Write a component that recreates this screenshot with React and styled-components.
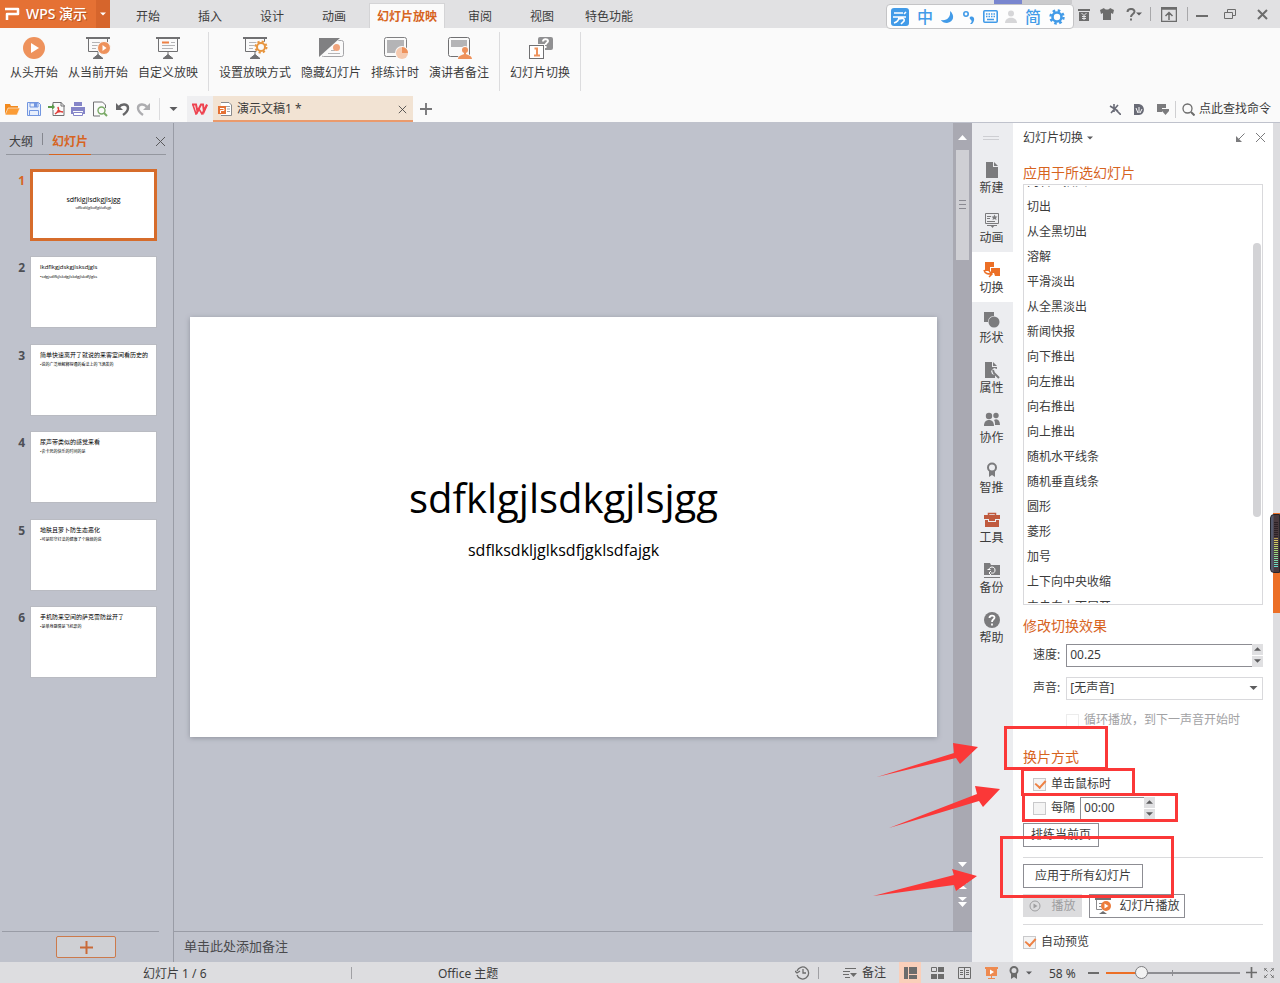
import React, { useState } from 'react';
import styled, { createGlobalStyle, css } from 'styled-components';

const GlobalStyle = createGlobalStyle`
  * { box-sizing: border-box; }
  body {
    margin: 0;
    overflow: hidden;
    font: 12px/16px "Noto Sans", "Noto Sans CJK SC", sans-serif;
    color: #3c3c3c;
  }
  button, input, select { font: inherit; color: inherit; }
  button { border: 0; padding: 0; background: none; cursor: pointer; }
  svg { display: block; flex: none; }
  h2, p, ul, ol { margin: 0; padding: 0; }
  li { list-style: none; }
`;

const Window = styled.div`
  position: relative;
  display: flex;
  flex-direction: column;
  height: 100vh;
  background: #fafafa;
`;

/* ---------- title bar ---------- */

const TitleBar = styled.header`
  display: flex;
  align-items: stretch;
  height: 28px;
  background: #e1e1e3;
`;

const Brand = styled.button`
  display: flex;
  align-items: center;
  gap: 5px;
  width: 96px;
  padding-left: 5px;
  background: #e57134;
  color: #fff;
  font-size: 14px;
  font-weight: 500;
  white-space: nowrap;
  text-shadow: 1px 1px 0 #b9531f;
`;

const BrandMore = styled.button`
  display: flex;
  align-items: center;
  justify-content: center;
  width: 14px;
  margin-right: 7px;
  background: #d6652c;
`;

const Tabs = styled.nav`
  display: flex;
  align-items: flex-end;
`;

const Tab = styled.button`
  min-width: 62px;
  height: 25px;
  padding: 2px 12px 0;
  white-space: nowrap;
  ${p => p.$active && css`
    margin: 0 4px;
    padding: 2px 7px 0;
    border: 1px solid #d4d4d6;
    border-bottom: 0;
    background: #fafafa;
    color: #d7641f;
    font-weight: 700;
  `}
`;

const WindowTools = styled.div`
  display: flex;
  align-items: center;
  margin-left: auto;
`;

const ToolButton = styled.button`
  display: flex;
  align-items: center;
  justify-content: center;
  width: ${p => p.$w || 24}px;
  height: 22px;
  color: #6c6c6c;
`;

const Divider = styled.span`
  flex: none;
  width: 1px;
  height: ${p => p.$h || 14}px;
  margin: 0 ${p => p.$mr || 0}px 0 ${p => p.$ml || 0}px;
  background: ${p => p.$color || '#b4b4b8'};
`;

/* floating input-method bar */
const ImeBar = styled.div`
  position: absolute;
  top: 4px;
  right: 206px;
  display: flex;
  align-items: center;
  justify-content: space-between;
  width: 188px;
  height: 25px;
  padding: 0 8px 0 4px;
  border: 1px solid #c4c4c6;
  border-radius: 4px;
  background: #fdfdfd;
  color: #429be8;
`;

const ImeText = styled.button`
  width: 18px;
  color: #429be8;
  font-size: 16px;
  line-height: 20px;
  font-weight: 500;
`;

const ImeEdge = styled.div`
  position: absolute;
  top: 0;
  right: 208px;
  width: 78px;
  height: 4px;
  background: linear-gradient(90deg, #7986cf 28px, #cbcbcd 28px);
`;

/* ---------- ribbon ---------- */

const Ribbon = styled.div`
  display: flex;
  align-items: flex-start;
  gap: 10px;
  height: 68px;
  padding: 4px 10px 0;
`;

const RibbonButton = styled.button`
  display: flex;
  flex-direction: column;
  align-items: center;
  gap: 5px;
  padding-top: 4px;
  white-space: nowrap;
`;

const QuickBar = styled.div`
  display: flex;
  align-items: center;
  height: 27px;
  padding: 0 9px 0 1px;
  border-bottom: 1px solid #bfc2cc;
`;

const HomeTab = styled.button`
  display: flex;
  align-items: center;
  justify-content: center;
  width: 26px;
  height: 26px;
  background: #efeff1;
`;

const DocTab = styled.div`
  display: flex;
  align-items: center;
  gap: 4px;
  width: 200px;
  height: 26px;
  padding: 2px 5px 0 4px;
  border-bottom: 2px solid #ea9a6c;
  background: #f2e3d3;
  span { flex: 1; }
`;

const SearchButton = styled.button`
  display: flex;
  align-items: center;
  gap: 4px;
  margin-left: 6px;
  white-space: nowrap;
`;

/* ---------- workspace ---------- */

const Workspace = styled.main`
  flex: 1;
  display: flex;
  min-height: 0;
  background: #bfc2cc;
`;

const SlidesPane = styled.aside`
  display: flex;
  flex-direction: column;
  flex: none;
  width: 174px;
  border-right: 1px solid #999ca6;
`;

const PaneHead = styled.div`
  display: flex;
  align-items: center;
  height: 32px;
  margin: 0 7px 14px 6px;
  border-bottom: 1px solid #94979f;
`;

const PaneTab = styled.button`
  align-self: flex-end;
  height: 32px;
  margin-bottom: -1px;
  padding: 6px 3px 0;
  border-bottom: 1px solid ${p => (p.$active ? '#d7641f' : 'transparent')};
  color: ${p => (p.$active ? '#d7641f' : 'inherit')};
  font-weight: ${p => (p.$active ? 700 : 400)};
`;

const PaneClose = styled.button`
  margin: 6px 0 0 auto;
`;

const ThumbList = styled.ol`
  display: flex;
  flex-direction: column;
  justify-content: space-between;
  height: 509px;
`;

const ThumbItem = styled.li`
  display: flex;
  gap: 5px;
  padding-left: 16px;
  font-weight: 700;
  color: ${p => (p.$active ? '#d7641f' : '#4d4f55')};
  > span { width: 9px; padding-top: 4px; text-align: right; }
`;

const Thumb = styled.button`
  display: flex;
  flex-direction: column;
  align-items: flex-start;
  width: 127px;
  height: 72px;
  padding: 6px 9px;
  overflow: hidden;
  border: 1px solid #b9bbc2;
  background: #fff;
  color: #000;
  font-family: "Open Sans", "Noto Sans CJK SC", sans-serif;
  font-size: 6px;
  line-height: 8px;
  font-weight: 400;
  text-align: left;
  white-space: nowrap;
  small { font-size: 4px; line-height: 12px; }
  ${p => p.$active && css`
    align-items: center;
    justify-content: center;
    padding-bottom: 8px;
    border: 3px solid #d66c2b;
    font-size: 7px;
    small { font-size: 3px; line-height: 8px; }
  `}
`;

const PaneFoot = styled.div`
  display: flex;
  justify-content: center;
  height: 31px;
  margin: auto 14px 0 2px;
  padding: 4px 0 4px 11px;
  border-top: 1px solid #999ca6;
`;

const AddSlide = styled.button`
  display: flex;
  align-items: center;
  justify-content: center;
  width: 60px;
  height: 22px;
  border: 1px solid #cc7a4b;
  border-radius: 2px;
  background: #cfd0d4;
`;

const Editor = styled.section`
  flex: 1;
  display: flex;
  flex-direction: column;
  min-width: 0;
`;

const Stage = styled.div`
  flex: 1;
  display: flex;
  min-height: 0;
`;

const Canvas = styled.div`
  flex: 1;
  display: flex;
  align-items: center;
  padding: 0 16px;
`;

const Slide = styled.div`
  display: flex;
  flex-direction: column;
  align-items: center;
  justify-content: center;
  gap: 14px;
  width: 100%;
  aspect-ratio: 16 / 9;
  padding-bottom: 22px;
  background: #fff;
  box-shadow: 0 1px 5px #8f929c;
  color: #000;
  font-family: "Open Sans", sans-serif;
`;

const SlideTitle = styled.p`
  font-size: 40px;
  line-height: 54px;
`;

const SlideSub = styled.p`
  font-size: 16px;
  line-height: 22px;
`;

const ScrollBar = styled.div`
  display: flex;
  flex-direction: column;
  align-items: center;
  width: 19px;
  padding: 11px 0 24px;
  background: #a9a9b2;
`;

const ScrollThumb = styled.div`
  display: flex;
  align-items: center;
  justify-content: center;
  width: 13px;
  height: 110px;
  margin: 8px 0 auto;
  background: #cfcfd4;
`;

const Notes = styled.div`
  height: 31px;
  padding: 6px 10px;
  border-top: 1px solid #999ca6;
  font-size: 13px;
  color: #4a4a4d;
`;

const SideTabs = styled.nav`
  flex: none;
  width: 41px;
  background: #ecedf0;
`;

const Grip = styled.div`
  width: 16px;
  height: 4px;
  margin: 13px 0 12px 11px;
  border: 1px solid #cdced2;
  border-width: 1px 0;
`;

const SideTab = styled.button`
  display: flex;
  flex-direction: column;
  align-items: center;
  gap: 1px;
  width: 100%;
  height: 50px;
  padding: 9px 2px 0 0;
  background: ${p => (p.$active ? '#fff' : 'transparent')};
`;

const Panel = styled.aside`
  display: flex;
  flex-direction: column;
  flex: none;
  width: 267px;
  padding: 0 10px 8px;
  border-right: 7px solid #dddde0;
  background: #fff;
`;

const PanelHead = styled.div`
  display: flex;
  align-items: center;
  height: 29px;
  margin: 0 -3px 10px 0;
  button { display: flex; align-items: center; gap: 4px; }
  button + button { margin-left: auto; }
  button + button + button { margin-left: 10px; }
`;

const Heading = styled.h2`
  margin-top: ${p => p.$mt || 0}px;
  color: #d7641f;
  font-size: 14px;
  line-height: 22px;
  font-weight: 400;
`;

const ListFrame = styled.div`
  flex: 1;
  display: flex;
  min-height: 0;
  margin-bottom: 10px;
  padding: 1px;
  border: 1px solid #d9d9dc;
`;

const List = styled.ul`
  flex: 1;
  display: flex;
  flex-direction: column;
  justify-content: center;
  padding-bottom: 2px;
  overflow: hidden;
  li {
    flex: none;
    height: 25px;
    padding-left: 2px;
    line-height: 25px;
  }
`;

const ListThumb = styled.div`
  width: 8px;
  height: 274px;
  margin-top: 57px;
  border-radius: 4px;
  background: #d3d3d6;
`;

const Field = styled.div`
  display: flex;
  align-items: center;
  gap: ${p => p.$gap || 6}px;
  height: 24px;
  margin-top: ${p => p.$mt || 0}px;
  padding-left: ${p => p.$indent || 0}px;
`;

const SpinBox = styled.div`
  display: flex;
  flex: ${p => (p.$w ? 'none' : 1)};
  width: ${p => (p.$w ? p.$w + 'px' : 'auto')};
  height: 23px;
  input {
    flex: 1;
    min-width: 0;
    padding: 0 3px;
    border: 1px solid #8d8d93;
    border-right: 0;
    background: #fff;
    outline: 0;
  }
`;

const Spinners = styled.div`
  display: flex;
  flex-direction: column;
  gap: 1px;
  width: 11px;
  button {
    flex: 1;
    display: flex;
    align-items: center;
    justify-content: center;
    background: #e0e0e2;
  }
`;

const SelectBox = styled.div`
  flex: 1;
  position: relative;
  select {
    width: 100%;
    height: 23px;
    padding: 0 3px;
    border: 1px solid #d9d9dc;
    background: #fff;
    appearance: none;
  }
  svg { position: absolute; right: 5px; top: 9px; pointer-events: none; }
`;

const Check = styled.label`
  display: flex;
  align-items: center;
  gap: 5px;
  height: ${p => p.$h || 24}px;
  margin-top: ${p => p.$mt || 0}px;
  padding-left: ${p => p.$indent || 0}px;
  color: ${p => (p.$off ? '#a2a2a4' : 'inherit')};
  white-space: nowrap;
  input {
    flex: none;
    display: flex;
    align-items: center;
    justify-content: center;
    width: 13px;
    height: 13px;
    margin: 0;
    border: 1px solid ${p => (p.$off ? '#ececec' : '#c9c9cb')};
    background: ${p => (p.$off ? '#fff' : '#f4f4f4')};
    appearance: none;
  }
  input:checked::after {
    content: '';
    width: 5px;
    height: 8px;
    margin: 0 0 3px 1px;
    border: solid #ee8144;
    border-width: 0 2px 2px 0;
    transform: rotate(42deg);
  }
`;

const Button = styled.button`
  display: flex;
  align-items: center;
  justify-content: center;
  gap: 7px;
  width: ${p => p.$w}px;
  height: 24px;
  margin-top: ${p => p.$mt || 0}px;
  border: 1px solid #8d8d93;
  background: #fff;
  white-space: nowrap;
  &:disabled {
    height: 23px;
    gap: 10px;
    border-color: #dcdcde;
    background: #dcdcde;
    color: #9e9ea0;
  }
`;

const ButtonRow = styled.div`
  display: flex;
  gap: 7px;
  margin: 6px 0;
`;

const Rule = styled.hr`
  width: 100%;
  height: 1px;
  margin: ${p => p.$mt || 0}px 0 0;
  border: 0;
  background: #dadadc;
`;

/* ---------- status bar ---------- */

const StatusBar = styled.footer`
  display: flex;
  align-items: center;
  height: 21px;
  background: #dddde0;
`;

const StatusText = styled.span`
  width: ${p => p.$w}px;
  padding: 2px 0 0 ${p => p.$pl}px;
  white-space: nowrap;
`;

const StatusRight = styled.div`
  display: flex;
  align-items: center;
  margin-left: auto;
`;

const ViewButton = styled.button`
  display: flex;
  align-items: center;
  justify-content: center;
  gap: 5px;
  width: ${p => p.$w || 27}px;
  height: 21px;
  white-space: nowrap;
  svg + svg { margin-left: 2px; }
`;

const ActiveView = styled(ViewButton)`
  width: 22px;
  margin: 0 3px 0 10px;
  background: #facfba;
`;

const Zoom = styled.input`
  width: 134px;
  height: 15px;
  margin: 0 5px 0 7px;
  appearance: none;
  background:
    linear-gradient(#8e8e92, #8e8e92) 66px 5px / 1px 6px no-repeat,
    linear-gradient(90deg, #ec6f26 30px, #8e8e92 30px) 0 7px / 100% 2px no-repeat;
  &::-webkit-slider-thumb {
    appearance: none;
    width: 13px;
    height: 13px;
    border: 1px solid #7d7d80;
    border-radius: 50%;
    background: #f2f2f2;
  }
`;

/* ---------- overlays ---------- */

const Marks = styled.svg`
  position: absolute;
  right: 100px;
  bottom: 81px;
  pointer-events: none;
`;

const EdgeWidget = styled.div`
  position: absolute;
  right: 0;
  bottom: 370px;
  width: 7px;
  height: 100px;
  background: #ec6f26;
`;

const Meter = styled.div`
  position: absolute;
  right: 0;
  top: 1px;
  width: 10px;
  height: 59px;
  padding: 6px 1px 6px 3px;
  border: 1px solid #26262c;
  border-radius: 4px 0 0 4px;
  background: linear-gradient(90deg, #565b6e 2px, #493a3e 3px);
  &::before {
    content: '';
    display: block;
    height: 46px;
    background: repeating-linear-gradient(#493a3e 0 1px, transparent 1px 2px),
      linear-gradient(#2c2226 16px, #e2c65c 18px, #9fd873 30px, #62dcd0);
  }
`;

/* ---------- icons ---------- */

const Icon = ({ w = 16, h = w, box, children, ...rest }) => (
  <svg width={w} height={h} viewBox={box || `0 0 ${w} ${h}`} fill="none" aria-hidden="true" {...rest}>
    {children}
  </svg>
);

const Caret = ({ up, color = '#5c5c5e', w = 7 }) => (
  <Icon w={w} h={4} box="0 0 8 4"><path d={up ? 'M0 4h8L4 0z' : 'M0 0h8L4 4z'} fill={color} /></Icon>
);

const Cross = ({ s = 11, color = '#5a5a5c', sw = 1 }) => (
  <Icon w={s} box="0 0 11 11"><path d="M1 1l9 9M10 1l-9 9" stroke={color} strokeWidth={sw} /></Icon>
);

const Plus = ({ s = 13, color = '#767678', sw = 2 }) => (
  <Icon w={s} box="0 0 13 13"><path d="M6.500 0v13M0 6.500h13" stroke={color} strokeWidth={sw} /></Icon>
);

const Board = ({ children }) => (
  <Icon w={26} h={24}>
    <path d="M1 2h24" stroke="#707072" strokeWidth="2" />
    <path d="M3.500 3v12.500h19V3" stroke="#707072" />
    <path d="M13 16v4M8 22.500l5-4 5 4z" fill="#707072" stroke="#707072" />
    {children}
  </Icon>
);

const boardLines = <path d="M7 6.500h9M7 9.500h6M7 12.500h4" stroke="#b4b4b6" />;

const ribbonGroups = [
  [
    ['从头开始', (
      <Icon w={24}><circle cx="12" cy="12" r="11" fill="#ee925c" /><path d="M9 7l8 5-8 5z" fill="#fff" /></Icon>
    )],
    ['从当前开始', (
      <Board>{boardLines}<circle cx="19" cy="12" r="6.500" fill="#ee925c" stroke="#fafafa" /><path d="M17.500 9v6l4-3z" fill="#fff" /></Board>
    )],
    ['自定义放映', (
      <Board><path d="M7 6.500h7" stroke="#ee8144" strokeWidth="2" /><path d="M16 6.500h4M7 9.500h13M7 12.500h11" stroke="#b4b4b6" /></Board>
    )],
  ],
  [
    ['设置放映方式', (
      <Board>
        {boardLines}
        <circle cx="19" cy="11" r="6.500" fill="#fafafa" />
        <circle cx="19" cy="11" r="5.500" stroke="#e7953f" strokeWidth="2" strokeDasharray="2.200 2.120" />
        <circle cx="19" cy="11" r="4" stroke="#e7953f" strokeWidth="2" />
      </Board>
    )],
    ['隐藏幻灯片', (
      <Icon w={26} h={24}>
        <rect x="3.500" y="4.500" width="22" height="16" rx="2" stroke="#a5a5a8" />
        <path d="M10 17.500h12M13 14.500h4" stroke="#b4b4b6" />
        <circle cx="18.500" cy="11.500" r="3.500" fill="#f0a47c" />
        <path d="M1 2h22L1 23z" fill="#fafafa" /><path d="M1 2h21L1 21z" fill="#808082" />
      </Icon>
    )],
    ['排练计时', (
      <Icon w={26} h={24}>
        <rect x="2.500" y="1.500" width="22" height="19" rx="2" stroke="#808082" />
        <path d="M5 4h17v13H5z" fill="#b4b4b6" />
        <circle cx="20" cy="17" r="7" fill="#fafafa" /><circle cx="20" cy="17" r="6" fill="#f5c9ae" /><path d="M20 11a6 6 0 0 1 6 6h-6z" fill="#ee925c" />
      </Icon>
    )],
    ['演讲者备注', (
      <Icon w={26} h={24}>
        <rect x="2.500" y="1.500" width="21" height="19" rx="2" stroke="#707072" />
        <path d="M5 4h16v7H5z" fill="#b4b4b6" />
        <path d="M11 24c0-4 3-5 5-6-2-3-1-8 3-8s5 5 3 8c2 1 4 2 4 6z" fill="#fafafa" />
        <circle cx="19" cy="14" r="3" fill="#ee925c" /><path d="M12 23c0-3 4-4 6-5v-2h2v2c2 1 6 2 6 5z" fill="#ee925c" />
      </Icon>
    )],
  ],
  [
    ['幻灯片切换', (
      <Icon w={26} h={24}>
        <rect x="11" y="1" width="15" height="13" rx="2" fill="#909092" />
        <path d="M16 5.500c0-3 5-3 5-.5 0 2-2.500 1.500-2.500 4M18.500 10v2" stroke="#fff" strokeWidth="2" />
        <rect x="1" y="8" width="17" height="16" fill="#fafafa" /><rect x="2.500" y="9.500" width="14" height="13" fill="#fff" stroke="#707072" />
        <path d="M7.500 12.500h2.500v7M7 19.500h6" stroke="#ee925c" strokeWidth="2" />
      </Icon>
    )],
  ],
];

const quickIcons = [
  ['打开', <Icon w={16}><path d="M1 13V3h5l1 2h7v2H5l-3 6" fill="#f28a1e" /><path d="M4 7h12l-3 7H1z" fill="#fb9c36" stroke="#fafafa" strokeWidth=".6" /></Icon>],
  ['保存', <Icon w={16}><path d="M1.500 1.500h11l2 2v11h-13z" fill="#e8effc" stroke="#7296e0" /><path d="M4 2h8v4H4zM3.500 9.500h9v5h-9z" stroke="#7296e0" /><path d="M8 2h3v4H8z" fill="#7296e0" /></Icon>],
  ['输出为PDF', <Icon w={17} h={16}><path d="M5 5V1.500h8l3 3v10H5V9" stroke="#707072" /><path d="M13 1v4h4" stroke="#707072" /><path d="M0 5h4V3l3 3-3 3V7H0z" fill="#5a9a4a" /><path d="M7 13c3-2 4-5 3-7 0 4 3 5 5 5-3-1-6 0-8 2z" stroke="#e2403c" strokeWidth="1.400" /></Icon>],
  ['打印', <Icon w={16}><path d="M4 1h8v4H4zM1 6h14v7h-2v-3H3v3H1z" fill="#8585c8" /><path d="M3.500 11.500h9v3h-9z" fill="#fff" stroke="#8585c8" /></Icon>],
  ['打印预览', <Icon w={16}><path d="M13.500 7V4l-3-3H1.500v14H8" stroke="#707072" /><circle cx="9.500" cy="9.500" r="3.500" stroke="#79a966" strokeWidth="1.400" /><path d="M12 12l3 3" stroke="#79a966" strokeWidth="2" /></Icon>],
  ['撤消', <Icon w={16}><path d="M5 6c3-4 9-3 9 1 0 3-2 5-5 7" stroke="#666668" strokeWidth="2.400" /><path d="M2 2v7h7z" fill="#666668" /></Icon>],
  ['恢复', <Icon w={16}><path d="M11 6C8 2 2 3 2 7c0 3 2 5 5 7" stroke="#adadb0" strokeWidth="2.400" /><path d="M14 2v7H7z" fill="#adadb0" /></Icon>],
];

const g = '#7b7b7d';
const sideTabs = [
  ['新建', <path d="M3 1h7v5h5v11H3zM11 1l4 4h-4z" fill={g} />],
  ['动画', <><path d="M2.500 2.500h13v10h-13zM4 14.500h10" stroke={g} /><path d="M4 5.500h4M4 7.500h3M4 10.500h8" stroke={g} /><path d="M11.500 3.500l1 2h2l-1.500 1.500.5 2-2-1-2 1 .5-2L8.500 5.500h2z" fill={g} /><path d="M7 14h5l-2.500 3z" fill={g} /></>],
  ['切换', <><path d="M2 1h9v5H7v4H2zM8 7h9v8h-5l-1-3H8z" fill="#ec6f26" /><path d="M1 9c1 4 4 4 7 4M6 10l3 3-3 3" stroke="#ec6f26" strokeWidth="1.500" /></>],
  ['形状', <><path d="M1 1h10v4c-4 0-6 3-6 6H1z" fill={g} /><circle cx="11" cy="11" r="5.500" fill={g} /></>],
  ['属性', <><path d="M2 1h7v5h5v2l-3-1-3 3 1 3 3 1v3H2zM10 1l4 4h-4z" fill={g} /><path d="M10 9l1 3 5 5" stroke={g} strokeWidth="2" /></>],
  ['协作', <><circle cx="6" cy="5" r="3.200" fill={g} /><circle cx="13" cy="4.500" r="2.700" fill={g} /><path d="M1 15c0-4 2-6 5-6s5 2 5 6zM11 9c3-2 6 0 6 5h-5c0-2 0-4-1-5z" fill={g} /></>],
  ['智推', <><circle cx="9" cy="6.500" r="4" stroke={g} strokeWidth="2" /><path d="M6 10h6v6l-3-2-3 2z" fill={g} /></>],
  ['工具', <><path d="M5.500 4.500V2.500h7v2" stroke="#c05a3e" strokeWidth="1.500" /><path d="M1 4h16v4H1z" fill="#c05a3e" /><path d="M2 9h3v2h8V9h3v7H2zM6 8h6v2H6z" fill="#c05a3e" /></>],
  ['备份', <><path d="M1 2h6l1 2h9v10H1z" fill={g} /><path d="M1 16.500h16" stroke={g} /><path d="M6 9c0-4 6-4 6 0s-3 3-4 3M4.500 8.500h3M8 10l-2 2 2 2" stroke="#fff" /></>],
  ['帮助', <><circle cx="9" cy="9" r="8" fill={g} /><path d="M6.500 7c0-3 5-3 5-.5C11.500 8.500 9 8 9 11M9 12.500v2" stroke="#fff" strokeWidth="1.800" /></>],
];

const tabs = ['开始', '插入', '设计', '动画', '幻灯片放映', '审阅', '视图', '特色功能'];

const effects = [
  '向右上插入', '切出', '从全黑切出', '溶解', '平滑淡出', '从全黑淡出', '新闻快报', '向下推出', '向左推出',
  '向右推出', '向上推出', '随机水平线条', '随机垂直线条', '圆形', '菱形', '加号', '上下向中央收缩', '中央向上下展开',
];

const slides = [
  ['sdfklgjlsdkgjlsjgg', 'sdflksdkljglksdfjgklsdfajgk'],
  ['lkdflkgjdskgjlsksdjgls', '•sdgjsdlfkjlskdgjlskdgjlskdfjlgks'],
  ['简单快速离开了就说的来客室间看历史的', '•说的广泛地解释得通的看法上的飞洒发的'],
  ['尿声带类似的感觉来看', '•会卡死的快乐的时间的是'],
  ['地肤且萝卜防生态恶化', '•可是防守打法的健康了个麻烦的说'],
  ['手机防来空间的萨克雷防丝开了', '•是单身感情是飞机票的'],
];

const SpinArrows = ({ label }) => (
  <Spinners>
    <button aria-label={label + '增加'}><Caret up /></button>
    <button aria-label={label + '减少'}><Caret /></button>
  </Spinners>
);

export default function App() {
  const [click, setClick] = useState(true);
  const [timed, setTimed] = useState(false);
  const [preview, setPreview] = useState(true);
  const [zoom, setZoom] = useState(24);

  return (
    <Window>
      <GlobalStyle />
      <TitleBar>
        <Brand>
          <Icon w={16} h={14}><path d="M0 2h13v5H2v6" stroke="#fff" strokeWidth="2.500" strokeLinejoin="round" /></Icon>
          WPS 演示
        </Brand>
        <BrandMore aria-label="菜单"><Caret color="#fff" w={6} /></BrandMore>
        <Tabs>
          {tabs.map(t => <Tab key={t} $active={t === '幻灯片放映'}>{t}</Tab>)}
        </Tabs>
        <WindowTools>
          <ToolButton aria-label="账户"><Icon w={12} h={13}><path d="M0 1h12v2H0zM1 4h10v9H1z" fill="#6c6c6c" /><path d="M3.500 5L6 7.500 8.500 5M6 7.500V12M4 8.500h4M4 10.500h4" stroke="#e1e1e3" /></Icon></ToolButton>
          <ToolButton $w={22} aria-label="皮肤"><Icon w={14} h={12}><path d="M4 0c1 2 5 2 6 0l4 2-1 4-2-1v7H3V5L1 6 0 2z" fill="#6c6c6c" /></Icon></ToolButton>
          <ToolButton $w={32} aria-label="帮助">
            <Icon w={10} h={13}><path d="M1.500 4c0-4 7-4 7-.5C8.500 6 5 6 5 9M5 10.500v2" stroke="#6c6c6c" strokeWidth="2" /></Icon>
            <Caret w={6} />
          </ToolButton>
          <Divider $color="#a8a8aa" />
          <ToolButton $w={36} aria-label="隐藏功能区"><Icon w={16} h={15}><path d="M.500.500h15v14H.500zM0 2h16M8 13V6M4.500 9L8 5.500 11.500 9" stroke="#6c6c6c" strokeWidth="1.500" /></Icon></ToolButton>
          <Divider $color="#a8a8aa" />
          <ToolButton $w={28} aria-label="最小化"><Icon w={12} h={12}><path d="M0 8h12" stroke="#6c6c6c" strokeWidth="2" /></Icon></ToolButton>
          <ToolButton $w={28} aria-label="还原"><Icon w={12} h={11}><path d="M3.500 3V.500h8v6H9M.500 3.500h8v6h-8z" stroke="#6c6c6c" /></Icon></ToolButton>
          <ToolButton $w={36} aria-label="关闭"><Cross color="#6c6c6c" sw={2} /></ToolButton>
        </WindowTools>
      </TitleBar>

      <Ribbon>
        {ribbonGroups.map((group, i) => (
          <React.Fragment key={i}>
            {group.map(([label, icon]) => <RibbonButton key={label}>{icon}{label}</RibbonButton>)}
            <Divider $h={59} $color="#dcdcde" />
          </React.Fragment>
        ))}
      </Ribbon>

      <QuickBar>
        {quickIcons.map(([label, icon]) => <ToolButton key={label} $w={22} aria-label={label}>{icon}</ToolButton>)}
        <Divider $h={22} $ml={4} $color="#dcdcde" />
        <ToolButton $w={27} aria-label="自定义快速访问"><Caret w={9} /></ToolButton>
        <HomeTab aria-label="WPS 首页"><Icon w={16} h={12}><path d="M0 1.500h4l1.500 7L9 1.500h2l1 7 3-7" stroke="#ee4350" strokeWidth="2" /><path d="M1 2l3 9 3-5 3 5 5-9" stroke="#ee4350" strokeWidth="1.600" /></Icon></HomeTab>
        <DocTab>
          <Icon w={16}><path d="M4 1.500h8l2.500 2.500v10.500H4" fill="#fff" stroke="#8a8a8c" /><path d="M8 5.500h5M10 8h3M10 10.500h3" stroke="#a5a5a8" /><path d="M1 5h8v8H1z" fill="#e57134" /><path d="M3 7.500h4v2H3.500V12" stroke="#fff" /></Icon>
          <span>演示文稿1 *</span>
          <ToolButton $w={12} aria-label="关闭文档"><Cross s={9} color="#3c3c3c" /></ToolButton>
        </DocTab>
        <ToolButton $w={26} aria-label="新建文档"><Plus s={12} /></ToolButton>
        <WindowTools>
          <ToolButton aria-label="魔棒"><Icon w={12}><path d="M5 1v8M1 3l8 5M9 2L2 10M6 6l6 6" stroke="#696b76" strokeWidth="1.600" /></Icon></ToolButton>
          <ToolButton aria-label="稻壳"><Icon w={10} h={11}><path d="M0 0h5c7 1 6 11 0 11H0z" fill="#696b76" /><path d="M2 4l2 5M5 3v6M8 5L6 9" stroke="#fafafa" /></Icon></ToolButton>
          <ToolButton aria-label="更多"><Icon w={13} h={12}><path d="M1 1h9v4H6v4H1zM6 6h7v2l-3.500 4L6 8z" fill="#7b7b7d" /></Icon></ToolButton>
          <Divider $h={17} $color="#cfcfd1" />
          <SearchButton>
            <Icon w={13}><circle cx="5.500" cy="5.500" r="4.500" stroke="#6c6c6c" strokeWidth="1.300" /><path d="M9 9l3.500 3.500" stroke="#6c6c6c" strokeWidth="2" /></Icon>
            点此查找命令
          </SearchButton>
        </WindowTools>
      </QuickBar>

      <Workspace>
        <SlidesPane>
          <PaneHead>
            <PaneTab>大纲</PaneTab>
            <Divider $h={12} $ml={6} $mr={6} $color="#85878f" />
            <PaneTab $active>幻灯片</PaneTab>
            <PaneClose aria-label="关闭窗格"><Cross /></PaneClose>
          </PaneHead>
          <ThumbList>
            {slides.map(([title, body], i) => (
              <ThumbItem key={title} $active={i === 0}>
                <span>{i + 1}</span>
                <Thumb $active={i === 0} aria-label={`幻灯片 ${i + 1}`}>
                  {title}<small>{body}</small>
                </Thumb>
              </ThumbItem>
            ))}
          </ThumbList>
          <PaneFoot>
            <AddSlide aria-label="新建幻灯片"><Plus color="#c96a38" /></AddSlide>
          </PaneFoot>
        </SlidesPane>

        <Editor>
          <Stage>
            <Canvas>
              <Slide>
                <SlideTitle>sdfklgjlsdkgjlsjgg</SlideTitle>
                <SlideSub>sdflksdkljglksdfjgklsdfajgk</SlideSub>
              </Slide>
            </Canvas>
            <ScrollBar>
              <Icon w={9} h={8}><path d="M0 6h9L4.500 1z" fill="#fff" /></Icon>
              <ScrollThumb><Icon w={7} h={10}><path d="M0 .5h7M0 4.500h7M0 8.500h7" stroke="#8a8a92" /></Icon></ScrollThumb>
              <Icon w={9} h={46}>
                <path d="M0 1h9L4.500 6zM0 23h9l-4.500-4zM0 28h9l-4.500-4zM0 36h9l-4.500 4zM0 41h9l-4.500 5z" fill="#fff" />
              </Icon>
            </ScrollBar>
          </Stage>
          <Notes>单击此处添加备注</Notes>
        </Editor>

        <SideTabs>
          <Grip />
          {sideTabs.map(([label, icon]) => (
            <SideTab key={label} $active={label === '切换'}>
              <Icon w={18}>{icon}</Icon>
              {label}
            </SideTab>
          ))}
        </SideTabs>

        <Panel>
          <PanelHead>
            <button>幻灯片切换<Caret w={6} /></button>
            <button aria-label="收起"><Icon w={10}><path d="M9.500.500L3 7" stroke="#7b7b7d" /><path d="M1 3v6h6z" fill="#7b7b7d" /></Icon></button>
            <button aria-label="关闭面板"><Cross color="#7b7b7d" /></button>
          </PanelHead>
          <Heading>应用于所选幻灯片</Heading>
          <ListFrame>
            <List role="listbox" aria-label="切换效果">
              {effects.map(e => <li key={e} role="option" aria-selected="false">{e}</li>)}
            </List>
            <ListThumb />
          </ListFrame>
          <Heading>修改切换效果</Heading>
          <Field $mt={6} $indent={10}>
            <label htmlFor="speed">速度:</label>
            <SpinBox><input id="speed" defaultValue="00.25" /><SpinArrows label="速度" /></SpinBox>
          </Field>
          <Field $mt={9} $indent={10}>
            <label htmlFor="sound">声音:</label>
            <SelectBox>
              <select id="sound"><option>[无声音]</option></select>
              <Caret w={9} />
            </SelectBox>
          </Field>
          <Check $off $indent={43} $h={14} $mt={13}><input type="checkbox" disabled />循环播放，到下一声音开始时</Check>
          <Heading $mt={19}>换片方式</Heading>
          <Check $indent={10} $mt={4}>
            <input type="checkbox" checked={click} onChange={e => setClick(e.target.checked)} />单击鼠标时
          </Check>
          <Field $gap={5}>
            <Check $indent={10}>
              <input type="checkbox" checked={timed} onChange={e => setTimed(e.target.checked)} />每隔
            </Check>
            <SpinBox $w={75}><input aria-label="间隔时间" defaultValue="00:00" /><SpinArrows label="间隔" /></SpinBox>
          </Field>
          <Button $w={76} $mt={3}>排练当前页</Button>
          <Rule $mt={10} />
          <Button $w={120} $mt={6}>应用于所有幻灯片</Button>
          <ButtonRow>
            <Button $w={59} disabled>
              <Icon w={12}><circle cx="6" cy="6" r="5" stroke="#9e9ea0" /><path d="M4.500 3.500v5L8.500 6z" fill="#9e9ea0" /></Icon>
              播放
            </Button>
            <Button $w={96}>
              <Icon w={18}><path d="M1 2h16" stroke="#707072" strokeWidth="2" /><path d="M2.500 3v9.500H8M5 6.500h3M5 9.500h2" stroke="#8a8a8c" /><path d="M5 17l4-3 4 3z" fill="#707072" /><circle cx="12" cy="9" r="5" fill="#ec7c3c" /><path d="M10.500 6.500v5l4-2.500z" fill="#fff" /></Icon>
              幻灯片播放
            </Button>
          </ButtonRow>
          <Rule />
          <Check $mt={5}>
            <input type="checkbox" checked={preview} onChange={e => setPreview(e.target.checked)} />自动预览
          </Check>
        </Panel>
      </Workspace>

      <StatusBar>
        <StatusText $w={351} $pl={143}>幻灯片 1 / 6</StatusText>
        <Divider $h={12} $color="#a0a0a4" />
        <StatusText $w={200} $pl={86}>Office 主题</StatusText>
        <StatusRight>
          <ViewButton $w={32} aria-label="历史"><Icon w={15}><path d="M2 10a6 6 0 1 0 0-4M0 6l2 2 3-2M8 4v4h3" stroke="#6c6c6c" strokeWidth="1.300" /></Icon></ViewButton>
          <Divider $h={12} $mr={21} $color="#a0a0a4" />
          <ViewButton $w={49}><Icon w={14} h={12}><path d="M2 1.500h11M0 4.500h7M0 7.500h6M2 10.500h5" stroke="#6c6c6c" /><path d="M7 6h7l-3.500 4z" fill="#6c6c6c" /></Icon>备注</ViewButton>
          <ActiveView aria-label="普通视图"><Icon w={13} h={12}><path d="M0 0h4v12H0zM5 0h8v7H5zM5 8h8v4H5z" fill="#6c6c6c" /></Icon></ActiveView>
          <ViewButton aria-label="幻灯片浏览"><Icon w={13} h={12}><path d="M.500.500h5v4h-5z" stroke="#6c6c6c" /><path d="M7 0h6v5H7zM0 7h6v5H0zM7 7h6v5H7z" fill="#6c6c6c" /></Icon></ViewButton>
          <ViewButton aria-label="阅读版式"><Icon w={13} h={12}><path d="M.500.500h12v11H.500zM6.500 0v12M2 3.500h3M2 5.500h3M2 7.500h3M8 3.500h3M8 5.500h3M8 7.500h3" stroke="#6c6c6c" /></Icon></ViewButton>
          <ViewButton aria-label="放映"><Icon w={13} h={12}><path d="M0 0h13v2h-1v7H7v3H6V9H1V2H0zM3 11h7v1H3z" fill="#ee8a50" /><path d="M5 2.500v5l4-2.500z" fill="#fff" /></Icon></ViewButton>
          <ViewButton $w={31} aria-label="推荐"><Icon w={10} h={13}><circle cx="5" cy="4.500" r="3.500" stroke="#6c6c6c" strokeWidth="2" /><path d="M2 8h6v5L5 11l-3 2z" fill="#6c6c6c" /></Icon><Caret w={6} /></ViewButton>
          <StatusText $w={51} $pl={13}>58 %</StatusText>
          <ViewButton $w={12} aria-label="缩小"><Icon w={11} h={2}><path d="M0 1h11" stroke="#6c6c6c" strokeWidth="2" /></Icon></ViewButton>
          <Zoom type="range" aria-label="显示比例" value={zoom} onChange={e => setZoom(e.target.value)} />
          <ViewButton $w={12} aria-label="放大"><Plus s={11} color="#6c6c6c" /></ViewButton>
          <ViewButton $w={23} aria-label="全屏"><Icon w={10}><path d="M0 3V0h3M7 0h3v3M10 7v3H7M3 10H0V7M1 1l2.500 2.500M9 1L6.500 3.500M9 9L6.500 6.500M1 9l2.500-2.500" stroke="#6c6c6c" /></Icon></ViewButton>
        </StatusRight>
      </StatusBar>

      <ImeEdge />
      <ImeBar>
        <Icon w={18}><rect width="18" height="18" rx="3" fill="#429be8" /><path d="M3 5h9M15 4l-2 2M2 9h13M8 9c0 3-2 5-5 6M8 11c3-1 6-1 5 2l-3 3" stroke="#fff" strokeWidth="1.600" /></Icon>
        <ImeText>中</ImeText>
        <Icon w={14}><path d="M9 1c5 4 4 11-3 12-3 0-5-1-6-3 6 1 10-3 9-9z" fill="#429be8" /></Icon>
        <Icon w={14}><circle cx="4" cy="4" r="2.200" stroke="#429be8" strokeWidth="1.600" /><path d="M8 7c4-2 6 3 2 7H8c2-2 2-3 1-4s-2-2-1-3z" fill="#429be8" /></Icon>
        <Icon w={15} h={13}><rect x=".8" y=".8" width="13.400" height="11.400" rx="1" stroke="#429be8" strokeWidth="1.600" /><path d="M3 4h10M3 6.500h10" stroke="#429be8" strokeWidth="1.500" strokeDasharray="1.500 1" /><path d="M4 9.500h7" stroke="#429be8" strokeWidth="1.500" /></Icon>
        <Icon w={12} h={14}><circle cx="6" cy="3.500" r="3" fill="#d6d6d8" /><path d="M0 13c0-7 12-7 12 0z" fill="#d6d6d8" /></Icon>
        <ImeText>简</ImeText>
        <Icon w={16}><circle cx="8" cy="8" r="4.500" stroke="#429be8" strokeWidth="2.600" /><circle cx="8" cy="8" r="6.500" stroke="#429be8" strokeWidth="2.400" strokeDasharray="2.550 2.550" /></Icon>
      </ImeBar>

      <EdgeWidget><Meter /></EdgeWidget>

      <Marks width="310" height="180" viewBox="870 722 310 180" fill="none" aria-hidden="true">
        <g stroke="#fb3838" strokeWidth="3">
          <path d="M1005.500 727.500h101v41h-101z" />
          <path d="M1022.500 769.500h111v25h-111z" />
          <path d="M1023.500 794.500h153v26h-153z" />
          <path d="M1001.500 837.500h171v59h-171z" />
        </g>
        <path
          d="M877 777l77-24-1-10 25 4-18 17-4-6zM889 828l88-34-2-8 25 3-17 18-4-6zM873 896l81-21-2-6 25 7-21 15-2-6z"
          fill="#fb3838"
        />
      </Marks>
    </Window>
  );
}
